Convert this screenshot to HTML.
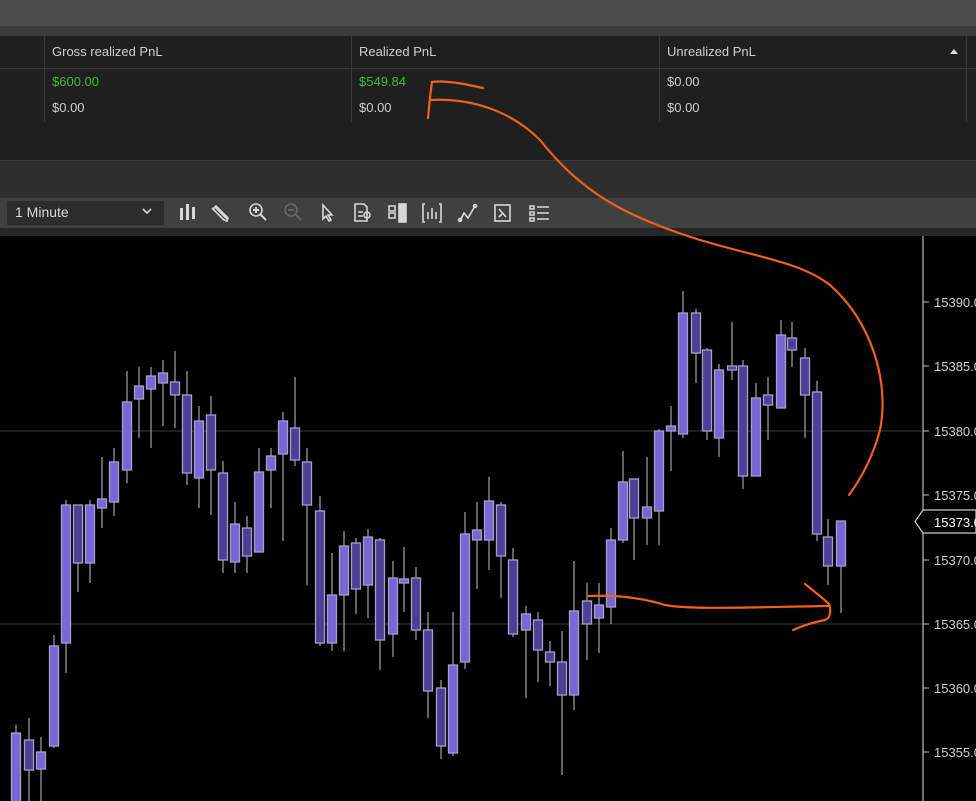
<!DOCTYPE html>
<html><head><meta charset="utf-8"><style>
*{margin:0;padding:0;box-sizing:border-box}
body{width:976px;height:801px;overflow:hidden;background:#000;font-family:"Liberation Sans",sans-serif;position:relative}
.a{position:absolute}
.t{font-size:13px;color:#cfcfcf;position:absolute}
</style></head><body>
<div class="a" style="left:0;top:0;width:976px;height:26px;background:#4d4d4d"></div>
<div class="a" style="left:0;top:26px;width:976px;height:10px;background:#3a3a3a"></div>
<div class="a" style="left:0;top:36px;width:976px;height:124px;background:#1f1f1f"></div>
<div class="a" style="left:0;top:68px;width:976px;height:1px;background:#383838"></div>
<div class="a" style="left:44px;top:36px;width:1px;height:86px;background:#3a3a3a"></div>
<div class="a" style="left:351px;top:36px;width:1px;height:86px;background:#3a3a3a"></div>
<div class="a" style="left:659px;top:36px;width:1px;height:86px;background:#3a3a3a"></div>
<div class="a" style="left:966px;top:36px;width:1px;height:86px;background:#3a3a3a"></div>
<div class="t" style="left:52px;top:44px">Gross realized PnL</div>
<div class="t" style="left:359px;top:44px">Realized PnL</div>
<div class="t" style="left:667px;top:44px">Unrealized PnL</div>
<div class="a" style="left:950px;top:49px;width:0;height:0;border-left:4px solid transparent;border-right:4px solid transparent;border-bottom:5px solid #ddd"></div>
<div class="t" style="left:52px;top:74px;color:#3dbb3d">$600.00</div>
<div class="t" style="left:359px;top:74px;color:#3dbb3d">$549.84</div>
<div class="t" style="left:667px;top:74px">$0.00</div>
<div class="t" style="left:52px;top:100px">$0.00</div>
<div class="t" style="left:359px;top:100px">$0.00</div>
<div class="t" style="left:667px;top:100px">$0.00</div>
<div class="a" style="left:0;top:160px;width:976px;height:38px;background:#2e2e2e;border-top:1px solid #3c3c3c"></div>
<div class="a" style="left:0;top:198px;width:976px;height:30px;background:#404040"></div>
<div class="a" style="left:0;top:228px;width:976px;height:8px;background:#262626"></div>
<div class="a" style="left:7px;top:201px;width:157px;height:24px;background:#2c2c2c"></div>
<div class="t" style="left:15px;top:204px;font-size:14px;color:#d8d8d8">1 Minute</div>
<svg class="a" style="left:0;top:198px" width="560" height="30" fill="none" stroke="#d8d8d8" stroke-width="1.6">
<path d="M143 11l4 4 4-4"/>
<g fill="#d8d8d8" stroke="none"><rect x="180" y="10" width="3" height="12"/><rect x="186" y="6" width="3" height="16"/><rect x="192" y="9" width="3" height="12"/></g>
<path d="M215 9l12 12M213 11l3-3 12 12-1 3-3-1-12-12z"/>
<circle cx="256" cy="12" r="6"/><path d="M260 16l6 6M253 12h6M256 9v6" stroke-width="2"/>
<g stroke="#666"><circle cx="291" cy="12" r="6"/><path d="M295 16l6 6M288 12h6" stroke-width="2"/></g>
<path d="M323 7v14l3-3 3 5 2-1-3-5h4z"/>
<path d="M355 6h9l3 3v14h-12z M358 14h5M358 18h5"/><circle cx="367" cy="17" r="3"/>
<path d="M389 8h6v5h-6zM389 15h6v5h-6z"/><rect x="399" y="6" width="7" height="18" fill="#d8d8d8"/>
<path d="M425 6h-2v18h2M439 6h2v18h-2M428 21V14M432 21V10M436 21V14"/>
<path d="M460 23l4-8 4 5 7-12" /><circle cx="460" cy="22" r="1.5"/><circle cx="475" cy="8" r="1.5"/>
<rect x="495" y="7" width="15" height="16"/><path d="M499 11l7 8M499 19l3-3"/>
<path d="M530 8h4v3h-4zM530 14h4v3h-4zM530 20h4v3h-4zM537 9h12M537 15h12M537 21h12"/>
</svg>
<svg class="a" style="left:0;top:0" width="976" height="801">
<line x1="0" y1="431" x2="922" y2="431" stroke="#3a3a3a"/>
<line x1="0" y1="624" x2="922" y2="624" stroke="#3a3a3a"/>
<g stroke="#a3a3a8" stroke-width="1.2">
<path d="M16 725V801M29 718V801M41 737V801M54 635V748M66 500V673M78 505V592M90 500V583M102 457V528M114 448V516M127 371V483M139 367V438M151 367V448M163 360V426M175 351V428M187 371V485M199 406V508M211 396V515M223 461V573M235 502V573M247 516V573M259 448V552M271 448V508M283 412V541M295 377V466M307 448V585M320 496V646M332 553V651M344 531V651M356 538V614M368 529V618M380 538V670M393 561V657M404 547V612M416 567V640M428 612V718M441 680V759M453 612V756M465 512V669M477 502V589M489 477V570M501 502V598M513 548V637M526 606V698M538 612V682M550 641V686M562 631V775M574 561V710M587 583V660M599 583V653M611 528V624M623 451V543M634 479V560M647 457V545M659 429V545M671 406V471M683 291V438M696 309V383M707 348V440M719 364V457M732 322V380M743 360V489M756 383V476M768 377V440M781 320V408M792 322V367M805 348V438M817 381V541M828 519V585M841 521V613"/>
</g>
<g stroke="#a59fc9" stroke-width="1.3">
<g fill="#7865d6">
<rect x="11.5" y="733" width="9" height="70"/><rect x="36.5" y="752" width="9" height="17"/><rect x="49.5" y="646" width="9" height="100"/><rect x="61.5" y="505" width="9" height="138"/><rect x="85.5" y="505" width="9" height="58"/><rect x="97.5" y="499" width="9" height="9"/><rect x="109.5" y="462" width="9" height="40"/><rect x="122.5" y="402" width="9" height="68"/><rect x="134.5" y="386" width="9" height="13"/><rect x="146.5" y="376" width="9" height="13"/><rect x="158.5" y="373" width="9" height="10"/><rect x="194.5" y="421" width="9" height="57"/><rect x="230.5" y="524" width="9" height="38"/><rect x="254.5" y="472" width="9" height="80"/><rect x="266.5" y="456" width="9" height="14"/><rect x="278.5" y="421" width="9" height="33"/>
<rect x="327.5" y="595" width="9" height="48"/><rect x="339.5" y="546" width="9" height="49"/><rect x="363.5" y="537" width="9" height="48"/><rect x="388.5" y="578" width="9" height="56"/><rect x="399.5" y="579" width="9" height="4"/><rect x="448.5" y="665" width="9" height="88"/><rect x="460.5" y="534" width="9" height="128"/><rect x="472.5" y="530" width="9" height="10"/><rect x="484.5" y="501" width="9" height="39"/><rect x="521.5" y="614" width="9" height="16"/><rect x="569.5" y="611" width="9" height="84"/><rect x="594.5" y="605" width="9" height="13"/><rect x="606.5" y="540" width="9" height="67"/><rect x="618.5" y="482" width="9" height="58"/><rect x="642.5" y="507" width="9" height="11"/><rect x="654.5" y="431" width="9" height="80"/><rect x="666.5" y="426" width="9" height="5"/><rect x="678.5" y="313" width="9" height="121"/><rect x="714.5" y="370" width="9" height="68"/><rect x="751.5" y="398" width="9" height="78"/><rect x="776.5" y="335" width="9" height="73"/><rect x="836.5" y="521" width="9" height="45"/>
</g>
<g fill="#4e3f96">
<rect x="24.5" y="740" width="9" height="30"/><rect x="73.5" y="505" width="9" height="58"/><rect x="170.5" y="382" width="9" height="13"/><rect x="182.5" y="395" width="9" height="78"/><rect x="206.5" y="415" width="9" height="55"/><rect x="218.5" y="473" width="9" height="87"/><rect x="242.5" y="528" width="9" height="28"/><rect x="290.5" y="428" width="9" height="32"/><rect x="302.5" y="462" width="9" height="43"/><rect x="315.5" y="511" width="9" height="132"/><rect x="351.5" y="543" width="9" height="46"/><rect x="375.5" y="540" width="9" height="100"/><rect x="411.5" y="578" width="9" height="52"/><rect x="423.5" y="630" width="9" height="61"/><rect x="436.5" y="688" width="9" height="58"/><rect x="496.5" y="505" width="9" height="51"/><rect x="508.5" y="560" width="9" height="74"/><rect x="533.5" y="620" width="9" height="30"/><rect x="545.5" y="652" width="9" height="10"/><rect x="557.5" y="662" width="9" height="33"/><rect x="582.5" y="601" width="9" height="23"/><rect x="629.5" y="479" width="9" height="39"/><rect x="691.5" y="313" width="9" height="40"/><rect x="702.5" y="350" width="9" height="81"/><rect x="727.5" y="366" width="9" height="4"/><rect x="738.5" y="366" width="9" height="110"/><rect x="763.5" y="395" width="9" height="10"/><rect x="787.5" y="338" width="9" height="12"/><rect x="800.5" y="358" width="9" height="37"/><rect x="812.5" y="392" width="9" height="142"/><rect x="823.5" y="537" width="9" height="29"/>
</g></g>
<line x1="923" y1="236" x2="923" y2="801" stroke="#bbb" stroke-width="1.2"/>
<g stroke="#bbb"><path d="M923 302h6M923 366h6M923 431h6M923 495h6M923 560h6M923 624h6M923 688h6M923 752h6"/></g>
<g fill="#cfcfcf" font-size="13" font-family="Liberation Sans,sans-serif">
<text x="934" y="307">15390.0</text><text x="934" y="371">15385.0</text><text x="934" y="436">15380.0</text><text x="934" y="500">15375.0</text><text x="934" y="565">15370.0</text><text x="934" y="629">15365.0</text><text x="934" y="693">15360.0</text><text x="934" y="757">15355.0</text>
</g>
<path d="M923 510H976V533H923L915 521.5Z" fill="#000" stroke="#ccc" stroke-width="1.2"/>
<text x="934" y="527" fill="#fff" font-size="13" font-family="Liberation Sans,sans-serif">15373.0</text>
<g stroke="#f2601a" stroke-width="2.2" fill="none" stroke-linecap="round">
<path d="M483 88C465 84 445 80 432 82C430 95 429 108 428 118"/>
<path d="M430 100C470 98 510 110 540 140C580 190 620 215 700 240C760 258 800 262 830 285C870 320 890 380 880 430C872 460 860 480 849 495"/>
<path d="M588 596C615 595 640 597 665 605C690 610 760 607 828 606"/>
<path d="M805 584C815 592 825 600 829 604C831 610 831 618 825 620C815 622 802 626 793 630"/>
</g>
</svg>
</body></html>
